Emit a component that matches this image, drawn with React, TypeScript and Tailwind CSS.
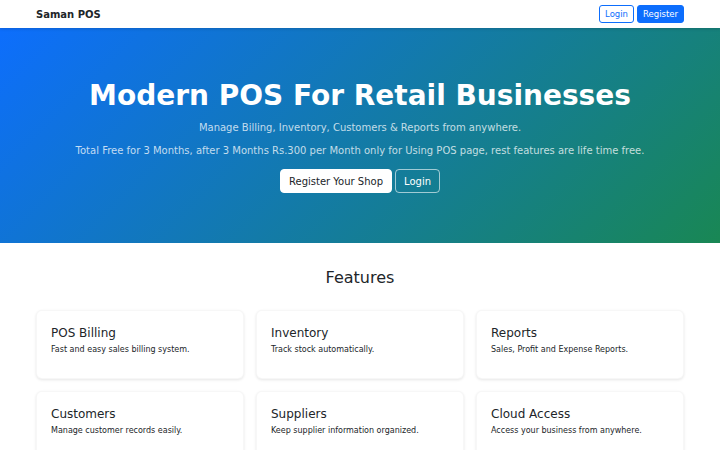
import React from 'react';

const features = [
  { title: 'POS Billing', text: 'Fast and easy sales billing system.' },
  { title: 'Inventory', text: 'Track stock automatically.' },
  { title: 'Reports', text: 'Sales, Profit and Expense Reports.' },
  { title: 'Customers', text: 'Manage customer records easily.' },
  { title: 'Suppliers', text: 'Keep supplier information organized.' },
  { title: 'Cloud Access', text: 'Access your business from anywhere.' },
];

const App: React.FC = () => {
  return (
    <div className="min-h-screen bg-white text-[#212529] font-['DejaVu_Sans',sans-serif]">
      {/* Navbar */}
      <nav className="h-[28px] bg-white shadow-[0_1px_3px_rgba(0,0,0,0.15)] relative z-10">
        <div className="h-full px-[36px] flex items-center justify-between">
          <span className="text-[10px] font-bold">Saman POS</span>
          <div className="flex items-center gap-[3px]">
            <button className="h-[18px] px-[5px] text-[8.5px] text-[#0d6efd] border border-[#0d6efd] rounded-[3px] bg-white">
              Login
            </button>
            <button className="h-[18px] px-[5px] text-[8.5px] text-white bg-[#0d6efd] border border-[#0d6efd] rounded-[3px]">
              Register
            </button>
          </div>
        </div>
      </nav>

      {/* Hero */}
      <section className="h-[215px] bg-[linear-gradient(135deg,#0d6efd,#198754)] text-white flex flex-col items-center pt-[50px]">
        <h1 className="text-[28px] font-bold leading-[36px]">Modern POS For Retail Businesses</h1>
        <p className="mt-[7px] text-[10px] text-white/75 leading-[14px]">
          Manage Billing, Inventory, Customers &amp; Reports from anywhere.
        </p>
        <p className="mt-[9px] text-[10px] text-white/75 leading-[14px]">
          Total Free for 3 Months, after 3 Months Rs.300 per Month only for Using POS page, rest features are life time free.
        </p>
        <div className="mt-[11px] flex items-center gap-[3px]">
          <button className="h-[24px] px-[8px] text-[10px] text-[#212529] bg-white border border-white rounded-[4px]">
            Register Your Shop
          </button>
          <button className="h-[24px] px-[8px] text-[10px] text-white border border-white/60 rounded-[4px]">
            Login
          </button>
        </div>
      </section>

      {/* Features */}
      <section className="px-[36px] pt-[25px]">
        <h2 className="text-center text-[16px] leading-[20px]">Features</h2>
        <div className="mt-[22px] grid grid-cols-3 gap-[12px]">
          {features.map((f) => (
            <div
              key={f.title}
              className="h-[69px] rounded-[6px] bg-white shadow-[0_1px_3px_rgba(0,0,0,0.1)] border border-black/[0.03] px-[14px] pt-[14px]"
            >
              <h3 className="text-[12px] leading-[16px]">{f.title}</h3>
              <p className="mt-[3px] text-[8px] leading-[11px] text-[#212529]">{f.text}</p>
            </div>
          ))}
        </div>
      </section>
    </div>
  );
};

export default App;
